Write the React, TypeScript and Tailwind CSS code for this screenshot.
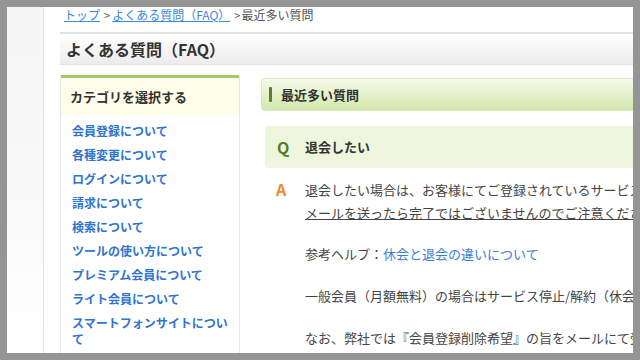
import React from "react";

const cats = [
  "会員登録について",
  "各種変更について",
  "ログインについて",
  "請求について",
  "検索について",
  "ツールの使い方について",
  "プレミアム会員について",
  "ライト会員について",
  "スマートフォンサイトについて",
];

export default function App() {
  return (
    <div
      className="w-[640px] h-[360px] bg-[#959595] p-[7px] overflow-hidden"
      style={{ fontFamily: '"Noto Sans CJK JP", "Noto Sans", sans-serif' }}
    >
      <div className="w-[626px] h-[346px] bg-white overflow-hidden flex">
        <div className="w-[37px] shrink-0 h-full bg-gradient-to-b from-[#f5f5f5] via-[#f8f8f8] to-white border-r border-[#e2e2e2]" />
        <div className="flex-1 min-w-0 pl-[16px] overflow-hidden">
          <div className="h-[14px] pt-[1px] text-[12px] leading-[14px] whitespace-nowrap text-[#555] pl-[4px]">
            <span className="text-[#3b88e0] underline">トップ</span>
            <span className="text-[11px] ml-[4px] mr-[2px]">&gt;</span>
            <span className="text-[#3b88e0] underline">よくある質問（FAQ）</span>
            <span className="text-[11px] ml-[4px] mr-[1px]">&gt;</span>
            <span>最近多い質問</span>
          </div>
          <div className="mt-[11px] h-[33px] w-[700px] border-t-2 border-b border-[#e2e2e2] bg-gradient-to-b from-white to-[#ececec] flex items-center pl-[6px]">
            <span className="text-[16px] font-bold text-[#333] whitespace-nowrap">よくある質問（FAQ）</span>
          </div>
          <div className="flex mt-[10px] gap-[21px]">
            <div className="w-[180px] shrink-0 h-[300px] border-x border-[#e6e6e6]">
              <div className="h-[40px] border-t-[3px] border-[#a9c86a] bg-[#fdfde9] flex items-center pl-[9px]">
                <span className="text-[13px] font-bold text-[#333]">カテゴリを選択する</span>
              </div>
              <ul className="pl-[11px] pr-[4px] pt-[4px]">
                {cats.map((c) => (
                  <li key={c} className="text-[12px] leading-[16px] font-semibold text-[#2f74d0] py-[4px]">
                    {c}
                  </li>
                ))}
              </ul>
            </div>
            <div className="w-[520px] shrink-0 pt-[3px]">
              <div className="h-[33px] rounded-[4px] border border-[#dbe8c4] bg-gradient-to-b from-[#f6fbea] to-[#d3e7ab] flex items-center pl-[7px]">
                <div className="w-[3px] h-[15px] bg-[#5d7f2b] rounded-[1px]" />
                <span className="ml-[9px] text-[13px] font-bold text-[#333] whitespace-nowrap">最近多い質問</span>
              </div>
              <div className="ml-[4px] mt-[15px] h-[42px] rounded-[4px] bg-[#eef6dd] flex items-center pl-[12px]">
                <span className="text-[16px] font-bold text-[#4e7d1c] w-[28px] shrink-0">Q</span>
                <span className="text-[13px] font-bold text-[#333]">退会したい</span>
              </div>
              <div className="ml-[4px] mt-[10px] flex">
                <span className="block shrink-0 text-[16px] font-bold text-[#ea8a2c] w-[40px] pl-[11px] leading-[23px]">A</span>
                <div className="shrink-0 text-[13px] text-[#444] whitespace-nowrap">
                  <p className="leading-[23px]">退会したい場合は、お客様にてご登録されているサービスの停止をお願いいたします。</p>
                  <p className="leading-[23px] underline">メールを送ったら完了ではございませんのでご注意ください。</p>
                  <p className="leading-[23px] mt-[18px]">
                    参考ヘルプ：<span className="text-[#3a7fd8]">休会と退会の違いについて</span>
                  </p>
                  <p className="leading-[23px] mt-[19px]">一般会員（月額無料）の場合はサービス停止/解約（休会）で完了です。</p>
                  <p className="leading-[23px] mt-[19px]">なお、弊社では『会員登録削除希望』の旨をメールにて受け付けております。</p>
                </div>
              </div>
            </div>
          </div>
        </div>
      </div>
    </div>
  );
}
